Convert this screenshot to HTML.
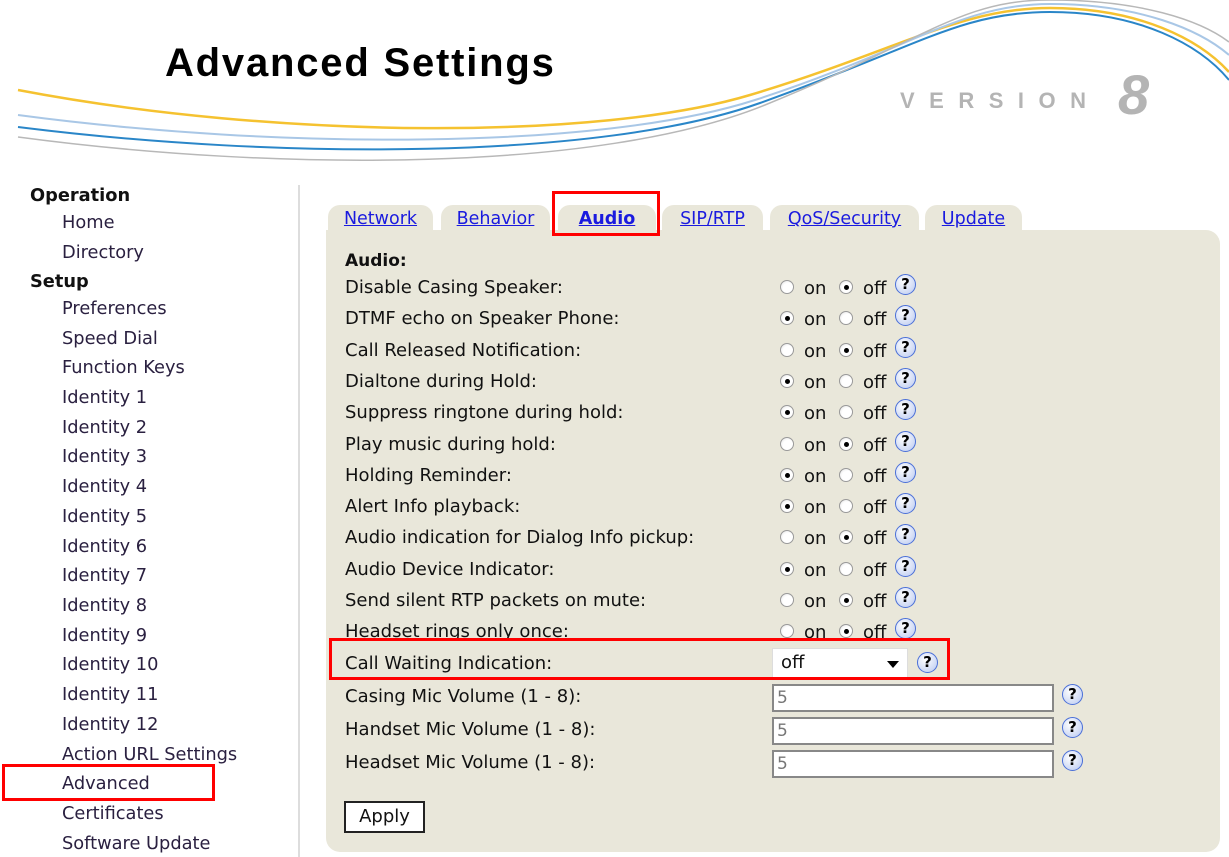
<!DOCTYPE html>
<html><head><meta charset="utf-8"><style>
*{margin:0;padding:0;box-sizing:border-box}
body{width:1229px;height:857px;background:#fff;position:relative;overflow:hidden;font-family:"DejaVu Sans",Verdana,sans-serif;font-size:18px;color:#111}
.a{position:absolute;white-space:nowrap}
.side{color:#2a2040;left:62px;font-size:17.8px}
.sh{left:30px;font-weight:bold;color:#111;font-size:17.8px}
.tab{position:absolute;top:205px;height:30px;background:#e9e7da;border-radius:12px 12px 0 0;text-align:center;line-height:28px;font-size:17.5px}
.tab a{color:#1a1adf;text-decoration:underline}
.lbl{left:345px}
.rad{position:absolute;width:14px;height:14px;border-radius:50%;border:1px solid #999;background:radial-gradient(circle at 60% 60%,#fff 50%,#ddd)}
.rad.on::after{content:"";position:absolute;left:4px;top:4px;width:5px;height:5px;border-radius:50%;background:#000}
.q{position:absolute;width:21px;height:21px;border-radius:50%;border:1.5px solid #4a6fd8;background:radial-gradient(circle at 40% 35%,#fff,#b8c8f0);font-weight:bold;font-size:15px;line-height:18px;text-align:center;color:#000}
.inp{position:absolute;left:772px;width:282px;height:28px;border:2px solid #888;background:#fff;color:#777;padding-left:3px;line-height:24px;font-size:17px}
.red{position:absolute;border:3px solid #f00}
</style></head><body>
<svg class="a" style="left:0;top:0" width="1229" height="180">
<path d="M18,90 C280,140 600,140 750,95 S 960,8 1050,8 S 1200,40 1229,72" fill="none" stroke="#f5c230" stroke-width="2.5"/>
<path d="M18,115 C280,150 600,150 755,100 S 960,4 1050,4 S 1200,30 1229,55" fill="none" stroke="#a9c7e6" stroke-width="2"/>
<path d="M18,127 C280,160 600,160 760,103 S 960,12 1050,12 S 1200,45 1229,80" fill="none" stroke="#2a86c8" stroke-width="2"/>
<path d="M18,137 C280,172 600,172 765,105 S 960,0 1050,0 S 1200,20 1229,42" fill="none" stroke="#b8b8b8" stroke-width="1.5"/>
</svg>
<div class="a" style="left:165px;top:41px;font-family:'Liberation Sans',sans-serif;font-weight:bold;font-size:40px;letter-spacing:1.8px;color:#000">Advanced Settings</div>
<div class="a" style="left:900px;top:88px;font-family:'Liberation Sans',sans-serif;font-weight:bold;font-size:22px;letter-spacing:14.5px;color:#b4b4b4">VERSION</div>
<div class="a" style="left:1118px;top:62px;font-family:'Liberation Sans',sans-serif;font-weight:bold;font-style:italic;font-size:56px;color:#b4b4b4">8</div>

<div class="a" style="left:298px;top:185px;width:2px;height:672px;background:#ddd"></div>
<div class="a sh" style="top:185px">Operation</div>
<div class="a side" style="top:212px">Home</div>
<div class="a side" style="top:242px">Directory</div>
<div class="a sh" style="top:271px">Setup</div>
<div class="a side" style="top:298px">Preferences</div>
<div class="a side" style="top:328px">Speed Dial</div>
<div class="a side" style="top:357px">Function Keys</div>
<div class="a side" style="top:387px">Identity 1</div>
<div class="a side" style="top:417px">Identity 2</div>
<div class="a side" style="top:446px">Identity 3</div>
<div class="a side" style="top:476px">Identity 4</div>
<div class="a side" style="top:506px">Identity 5</div>
<div class="a side" style="top:536px">Identity 6</div>
<div class="a side" style="top:565px">Identity 7</div>
<div class="a side" style="top:595px">Identity 8</div>
<div class="a side" style="top:625px">Identity 9</div>
<div class="a side" style="top:654px">Identity 10</div>
<div class="a side" style="top:684px">Identity 11</div>
<div class="a side" style="top:714px">Identity 12</div>
<div class="a side" style="top:744px">Action URL Settings</div>
<div class="a side" style="top:773px">Advanced</div>
<div class="a side" style="top:803px">Certificates</div>
<div class="a side" style="top:833px">Software Update</div>
<div class="red" style="left:2px;top:764px;width:213px;height:37px"></div>

<div class="a" style="left:326px;top:230px;width:894px;height:622px;background:#e9e7da;border-radius:0 14px 14px 14px"></div>
<div class="tab" style="left:328px;width:105px"><a>Network</a></div>
<div class="tab" style="left:441px;width:109px"><a>Behavior</a></div>
<div class="tab" style="left:558px;width:98px"><a style="font-weight:bold">Audio</a></div>
<div class="tab" style="left:662px;width:101px"><a>SIP/RTP</a></div>
<div class="tab" style="left:770px;width:149px"><a>QoS/Security</a></div>
<div class="tab" style="left:925px;width:97px"><a>Update</a></div>
<div class="red" style="left:552px;top:191px;width:108px;height:45px"></div>

<div class="a lbl" style="top:251px;font-weight:bold;font-size:17px">Audio:</div>
<div id="rows"></div>
<script>
var rows=[["Disable Casing Speaker:",0],["DTMF echo on Speaker Phone:",1],["Call Released Notification:",0],["Dialtone during Hold:",1],["Suppress ringtone during hold:",1],["Play music during hold:",0],["Holding Reminder:",1],["Alert Info playback:",1],["Audio indication for Dialog Info pickup:",0],["Audio Device Indicator:",1],["Send silent RTP packets on mute:",0],["Headset rings only once:",0]];
var h="";
rows.forEach(function(r,i){var y=288+i*31.3;
h+='<div class="a lbl" style="top:'+(y-11)+'px">'+r[0]+'</div>';
h+='<div class="rad'+(r[1]?' on':'')+'" style="left:780px;top:'+(y-8)+'px"></div><div class="a" style="left:804px;top:'+(y-10)+'px">on</div>';
h+='<div class="rad'+(r[1]?'':' on')+'" style="left:839px;top:'+(y-8)+'px"></div><div class="a" style="left:863px;top:'+(y-10)+'px">off</div>';
h+='<div class="q" style="left:895px;top:'+(y-14)+'px">?</div>';});
document.getElementById("rows").innerHTML=h;
</script>
<div class="a lbl" style="top:653px">Call Waiting Indication:</div>
<div class="a" style="left:772px;top:648px;width:136px;height:30px;background:#fff;border:1px solid #ddd;padding-left:8px;line-height:28px">off<span style="position:absolute;right:8px;top:12px;border:6px solid transparent;border-top:7px solid #000"></span></div>
<div class="q" style="left:917px;top:652px">?</div>
<div class="red" style="left:329px;top:638px;width:621px;height:42px"></div>

<div class="a lbl" style="top:686px">Casing Mic Volume (1 - 8):</div>
<div class="inp" style="top:684px">5</div><div class="q" style="left:1062px;top:684px">?</div>
<div class="a lbl" style="top:719px">Handset Mic Volume (1 - 8):</div>
<div class="inp" style="top:717px">5</div><div class="q" style="left:1062px;top:717px">?</div>
<div class="a lbl" style="top:752px">Headset Mic Volume (1 - 8):</div>
<div class="inp" style="top:750px">5</div><div class="q" style="left:1062px;top:750px">?</div>
<div class="a" style="left:344px;top:801px;width:81px;height:32px;border:2px solid #222;background:#fff;text-align:center;line-height:28px;font-size:18px">Apply</div>
</body></html>
